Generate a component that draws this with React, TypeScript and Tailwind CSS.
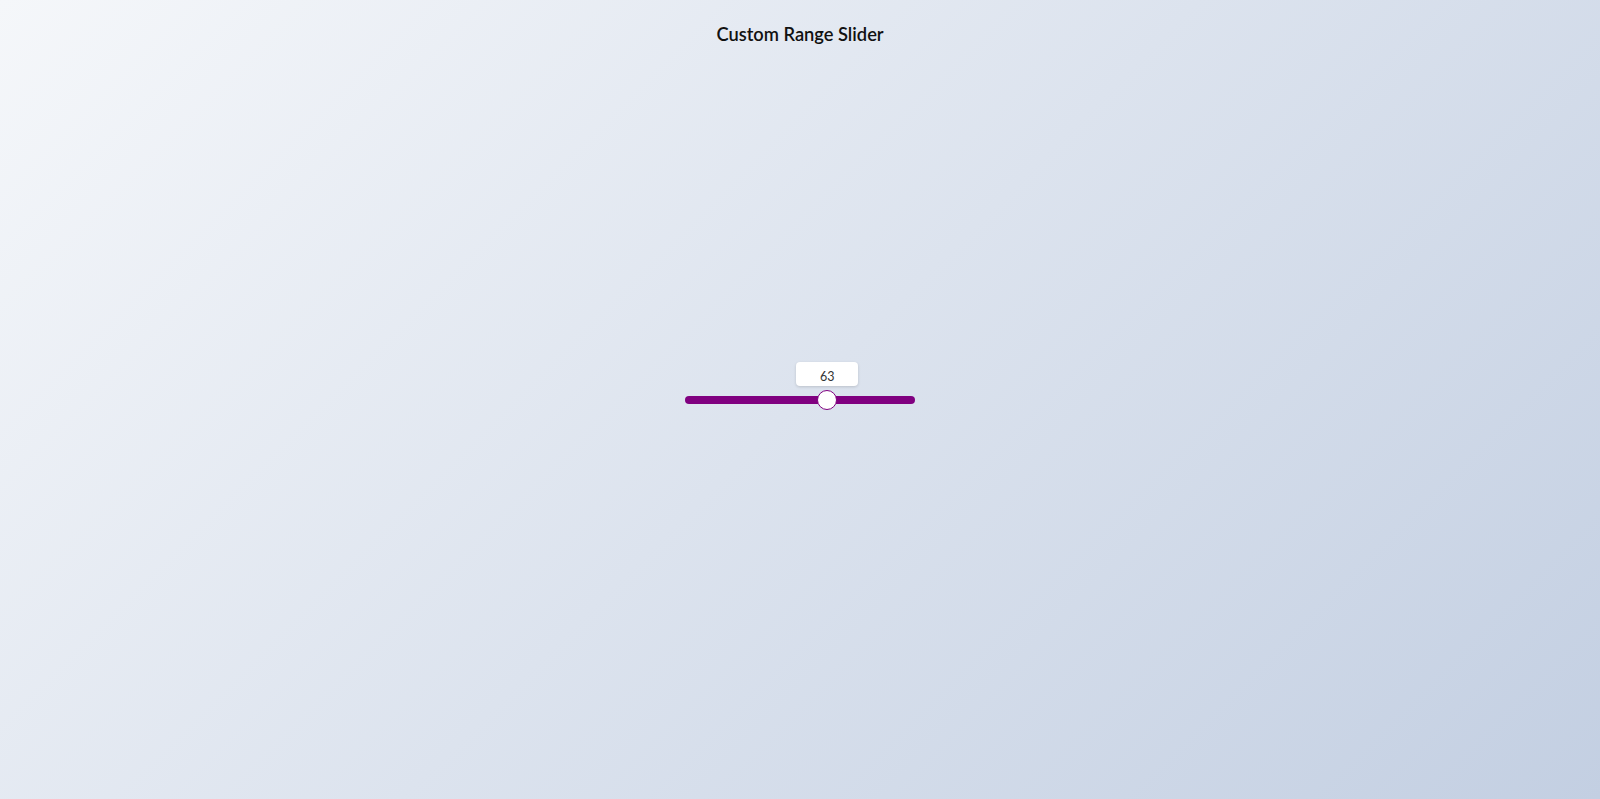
import { useRef, useState } from "react";

const MIN = 0;
const MAX = 100;

function RangeSlider() {
  const [value, setValue] = useState(63);
  const trackRef = useRef<HTMLDivElement>(null);

  const pct = (value - MIN) / (MAX - MIN);

  const setFromPointer = (clientX: number) => {
    const el = trackRef.current;
    if (!el) return;
    const rect = el.getBoundingClientRect();
    const usable = rect.width - 20;
    const ratio = Math.min(1, Math.max(0, (clientX - rect.left - 10) / usable));
    setValue(Math.round(MIN + ratio * (MAX - MIN)));
  };

  return (
    <div
      ref={trackRef}
      className="relative h-[8px] w-[230px] cursor-pointer rounded-full bg-[#800080]"
      onPointerDown={(e) => {
        e.currentTarget.setPointerCapture(e.pointerId);
        setFromPointer(e.clientX);
      }}
      onPointerMove={(e) => {
        if (e.buttons === 1) setFromPointer(e.clientX);
      }}
    >
      {/* value bubble */}
      <div
        className="absolute top-[-34px] flex h-[24px] w-[62px] -translate-x-1/2 items-center justify-center rounded bg-white pt-[7px] text-[12.5px] text-[#333] shadow-[0_1px_3px_rgba(0,0,0,0.15)]"
        style={{ left: `calc(10px + ${pct} * (100% - 20px))` }}
      >
        {value}
      </div>

      {/* thumb */}
      <div
        className="absolute top-1/2 h-[20px] w-[20px] -translate-x-1/2 -translate-y-1/2 rounded-full border border-[#800080] bg-white"
        style={{ left: `calc(10px + ${pct} * (100% - 20px))` }}
      />
    </div>
  );
}

export default function App() {
  return (
    <div
      className="grid h-screen grid-rows-[1fr_auto_1fr] bg-[linear-gradient(135deg,#f5f7fa_0%,#c3cfe2_100%)] text-[#111]"
      style={{ fontFamily: "Lato, 'Open Sans', sans-serif" }}
    >
      <h1 className="self-start pt-[23px] text-center text-[18.3px] font-semibold leading-[22px]">
        Custom Range Slider
      </h1>
      <div className="flex justify-center">
        <RangeSlider />
      </div>
      <div />
    </div>
  );
}
